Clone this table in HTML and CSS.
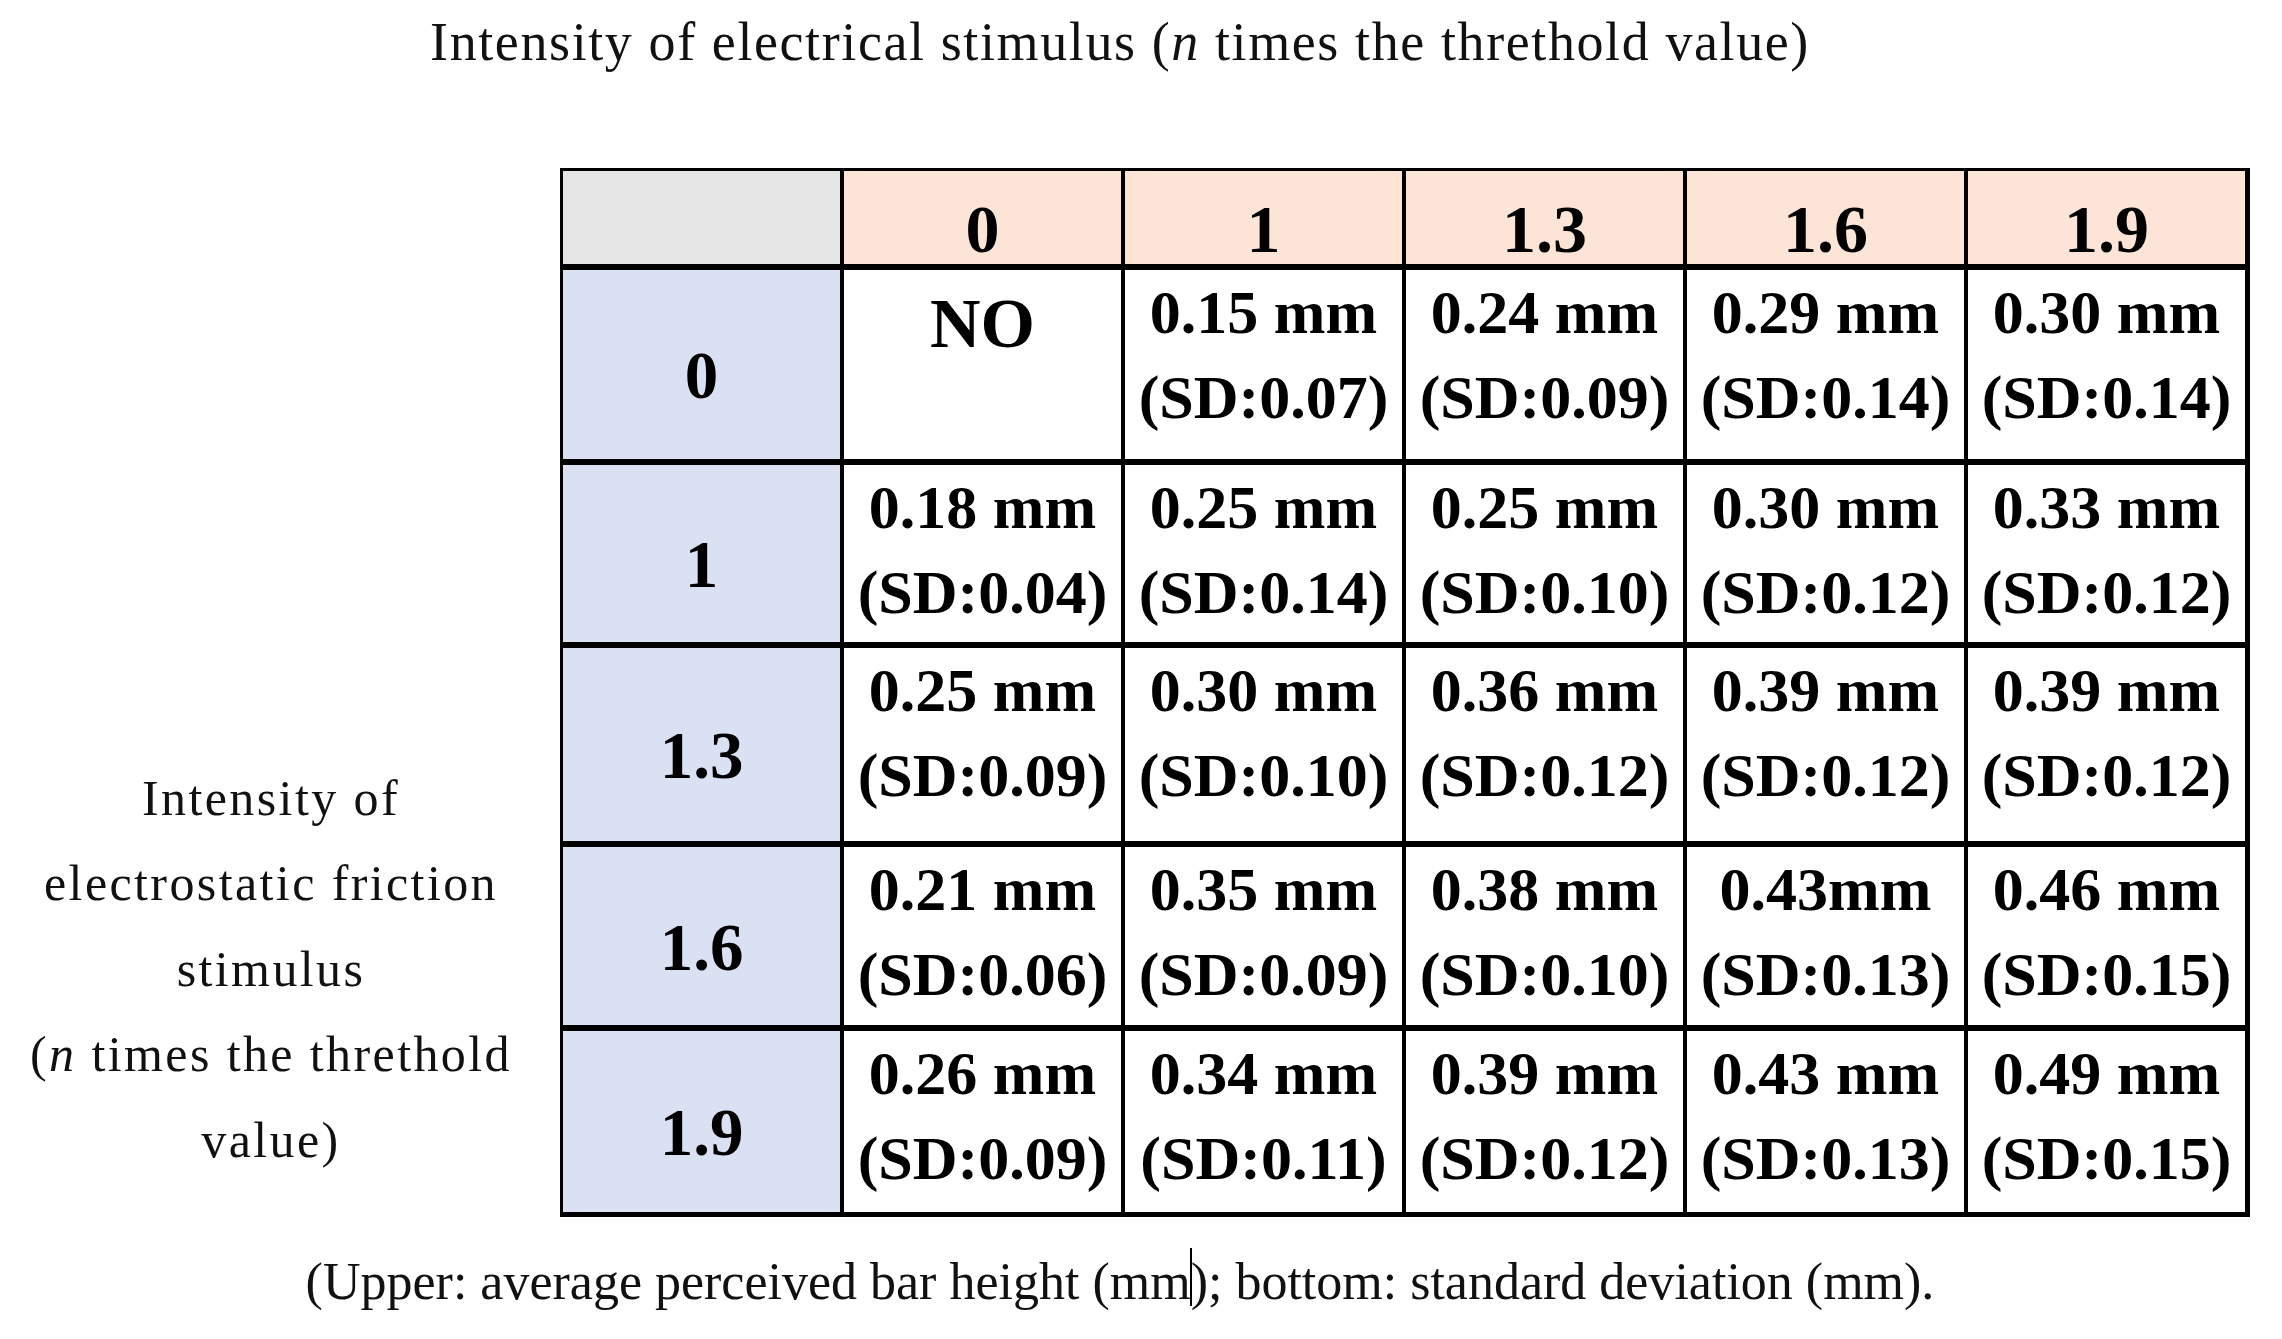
FILE: index.html
```html
<!DOCTYPE html>
<html lang="en">
<head>
<meta charset="utf-8">
<title>Perceived bar height</title>
<link rel="stylesheet" href="styles.css">
</head>
<body>
<div class="page">
  <div class="title">Intensity of electrical stimulus (<i>n</i> times the threthold value)</div>
  <div class="middle">
    <div class="side-label">Intensity of<br>electrostatic friction<br>stimulus<br>(<i>n</i> times the threthold<br>value)</div>
    <div class="grid">
      <div class="corner"></div>
      <div class="colhead">0</div>
      <div class="colhead">1</div>
      <div class="colhead">1.3</div>
      <div class="colhead">1.6</div>
      <div class="colhead">1.9</div>

      <div class="rowhead">0</div>
      <div class="cell no">NO</div>
      <div class="cell">0.15 mm<br>(SD:0.07)</div>
      <div class="cell">0.24 mm<br>(SD:0.09)</div>
      <div class="cell">0.29 mm<br>(SD:0.14)</div>
      <div class="cell">0.30 mm<br>(SD:0.14)</div>

      <div class="rowhead">1</div>
      <div class="cell">0.18 mm<br>(SD:0.04)</div>
      <div class="cell">0.25 mm<br>(SD:0.14)</div>
      <div class="cell">0.25 mm<br>(SD:0.10)</div>
      <div class="cell">0.30 mm<br>(SD:0.12)</div>
      <div class="cell">0.33 mm<br>(SD:0.12)</div>

      <div class="rowhead">1.3</div>
      <div class="cell">0.25 mm<br>(SD:0.09)</div>
      <div class="cell">0.30 mm<br>(SD:0.10)</div>
      <div class="cell">0.36 mm<br>(SD:0.12)</div>
      <div class="cell">0.39 mm<br>(SD:0.12)</div>
      <div class="cell">0.39 mm<br>(SD:0.12)</div>

      <div class="rowhead">1.6</div>
      <div class="cell">0.21 mm<br>(SD:0.06)</div>
      <div class="cell">0.35 mm<br>(SD:0.09)</div>
      <div class="cell">0.38 mm<br>(SD:0.10)</div>
      <div class="cell">0.43mm<br>(SD:0.13)</div>
      <div class="cell">0.46 mm<br>(SD:0.15)</div>

      <div class="rowhead">1.9</div>
      <div class="cell">0.26 mm<br>(SD:0.09)</div>
      <div class="cell">0.34 mm<br>(SD:0.11)</div>
      <div class="cell">0.39 mm<br>(SD:0.12)</div>
      <div class="cell">0.43 mm<br>(SD:0.13)</div>
      <div class="cell">0.49 mm<br>(SD:0.15)</div>
    </div>
  </div>
  <div class="caption">(Upper: average perceived bar height (mm<span class="caret"></span>); bottom: standard deviation (mm).</div>
</div>
</body>
</html>
```

FILE: styles.css
```css
html, body {
  margin: 0;
  padding: 0;
  background: #ffffff;
}

.page {
  width: 2282px;
  height: 1339px;
  overflow: hidden;
  font-family: "Liberation Serif", "Times New Roman", serif;
  color: #111111;
}

.title {
  width: 2240px;
  margin-top: 12px;
  height: 60px;
  line-height: 60px;
  font-size: 54px;
  letter-spacing: 1.6px;
  text-align: center;
  white-space: nowrap;
}

.middle {
  display: flex;
  flex-direction: row;
  margin-top: 96px;
}

.side-label {
  width: 542px;
  flex: none;
  align-self: flex-end;
  margin-bottom: 34px;
  font-size: 50px;
  line-height: 85.5px;
  letter-spacing: 2.4px;
  text-align: center;
  white-space: nowrap;
}

.grid {
  margin-left: 18px;
  display: grid;
  grid-template-columns: repeat(6, 277px);
  grid-template-rows: 93px 189px 177px 193px 178px 181px;
  column-gap: 4px;
  row-gap: 6px;
  padding: 3px 5px 5px 3px;
  background: #000000;
  color: #000000;
  font-weight: bold;
}

.corner {
  background: #e6e6e6;
}

.colhead {
  background: #fce4d6;
  font-size: 68px;
  line-height: 68px;
  padding-top: 24px;
  text-align: center;
}

.rowhead {
  background: #d9e1f2;
  font-size: 67px;
  display: flex;
  align-items: center;
  justify-content: center;
  padding-top: 22px;
  box-sizing: border-box;
}

.cell {
  background: #ffffff;
  font-size: 62px;
  line-height: 85px;
  text-align: center;
  white-space: nowrap;
}

.cell.no {
  font-size: 70px;
  padding-top: 11px;
  box-sizing: border-box;
}

.caption {
  width: 2240px;
  margin-top: 31px;
  font-size: 52px;
  line-height: 60px;
  text-align: center;
  white-space: nowrap;
}

.caret {
  display: inline-block;
  width: 2px;
  height: 58px;
  margin: 0 -1px;
  background: #000000;
  vertical-align: -7px;
}
```
